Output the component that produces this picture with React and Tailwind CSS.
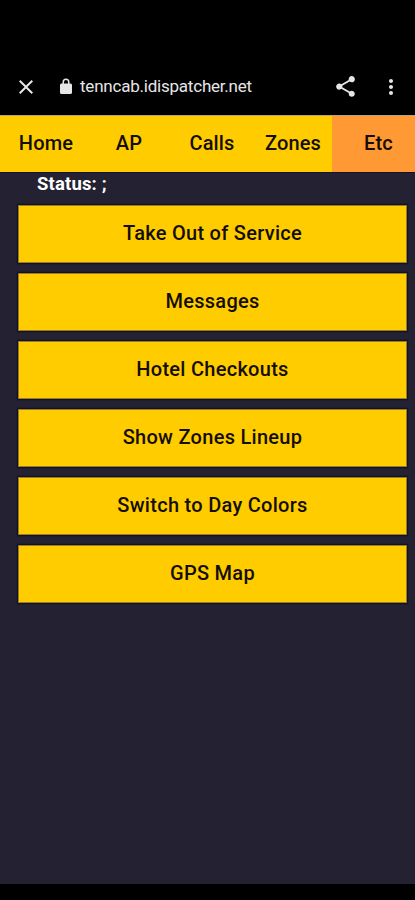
import React, { useState } from 'react';
import { MdClose, MdMoreVert, MdShare } from 'react-icons/md';

const tabs = [
  { label: 'Home', pad: 'pl-[9px]' },
  { label: 'AP', pad: 'pl-[9px]' },
  { label: 'Calls', pad: 'pl-[9px]' },
  { label: 'Zones', pad: 'pl-[5px]' },
  { label: 'Etc', pad: 'pl-[10px]' },
];

const actions = [
  'Take Out of Service',
  'Messages',
  'Hotel Checkouts',
  'Show Zones Lineup',
  'Switch to Day Colors',
  'GPS Map',
];

// Solid padlock, no keyhole
function LockIcon() {
  return (
    <svg viewBox="0 0 12 16" className="mb-[2px] ml-[22px] h-[16px] w-[12px]" fill="currentColor" aria-hidden="true">
      <path
        fillRule="evenodd"
        d="M2.5 5.5V4a3.5 3.5 0 0 1 7 0v1.5h1A1.5 1.5 0 0 1 12 7v7.5a1.5 1.5 0 0 1-1.5 1.5h-9A1.5 1.5 0 0 1 0 14.5V7a1.5 1.5 0 0 1 1.5-1.5zM4 5.5h4V4a2 2 0 0 0-4 0z"
      />
    </svg>
  );
}

function BrowserBar() {
  return (
    <header className="h-[115px] shrink-0 bg-black pt-[58px] text-[#e6e6e6]">
      <div className="flex h-[57px] items-center pl-[14px] pr-[12px]">
        <button type="button" aria-label="Close">
          <MdClose className="size-[24px]" />
        </button>
        <LockIcon />
        <span className="ml-[8px] flex-1 text-[17px] leading-none tracking-[-0.22px]">tenncab.idispatcher.net</span>
        <button type="button" aria-label="Share" className="mr-[21px]">
          <MdShare className="size-[25px]" />
        </button>
        <button type="button" aria-label="More">
          <MdMoreVert className="size-[24px]" />
        </button>
      </div>
    </header>
  );
}

function TabBar({ active, onSelect }) {
  return (
    <nav className="grid h-[58px] shrink-0 grid-cols-5 border-b border-t border-b-[#14122c] border-t-[#b9a675]">
      {tabs.map((tab) => (
        <button
          key={tab.label}
          type="button"
          onClick={() => onSelect(tab.label)}
          className={`pb-[2px] text-[20px] font-medium tracking-[0.15px] text-[#140e00] ${tab.pad} ${
            active === tab.label ? 'bg-[#ff9933]' : 'bg-[#ffcc00]'
          }`}
        >
          {tab.label}
        </button>
      ))}
    </nav>
  );
}

export default function App() {
  const [active, setActive] = useState('Etc');

  return (
    <div className="flex h-[900px] w-full flex-col overflow-hidden bg-[#242232] font-['Roboto',sans-serif]">
      <BrowserBar />
      <TabBar active={active} onSelect={setActive} />

      <main className="flex-1">
        <p className="h-[32px] pl-[37px] text-[18.5px] font-bold leading-[22px] tracking-[0.15px] text-white">Status: ;</p>
        <div className="flex flex-col gap-[9.92px] pl-[18px] pr-[8px]">
          {actions.map((label) => (
            <button
              key={label}
              type="button"
              className="h-[58px] border border-[#9c7d1c] bg-[#ffcc00] pb-[2px] text-[20px] font-medium tracking-[0.28px] text-[#140e00] shadow-[0_0_1px_1px_#11102c]"
            >
              {label}
            </button>
          ))}
        </div>
      </main>

      <footer className="h-[16px] shrink-0 bg-black" />
    </div>
  );
}
